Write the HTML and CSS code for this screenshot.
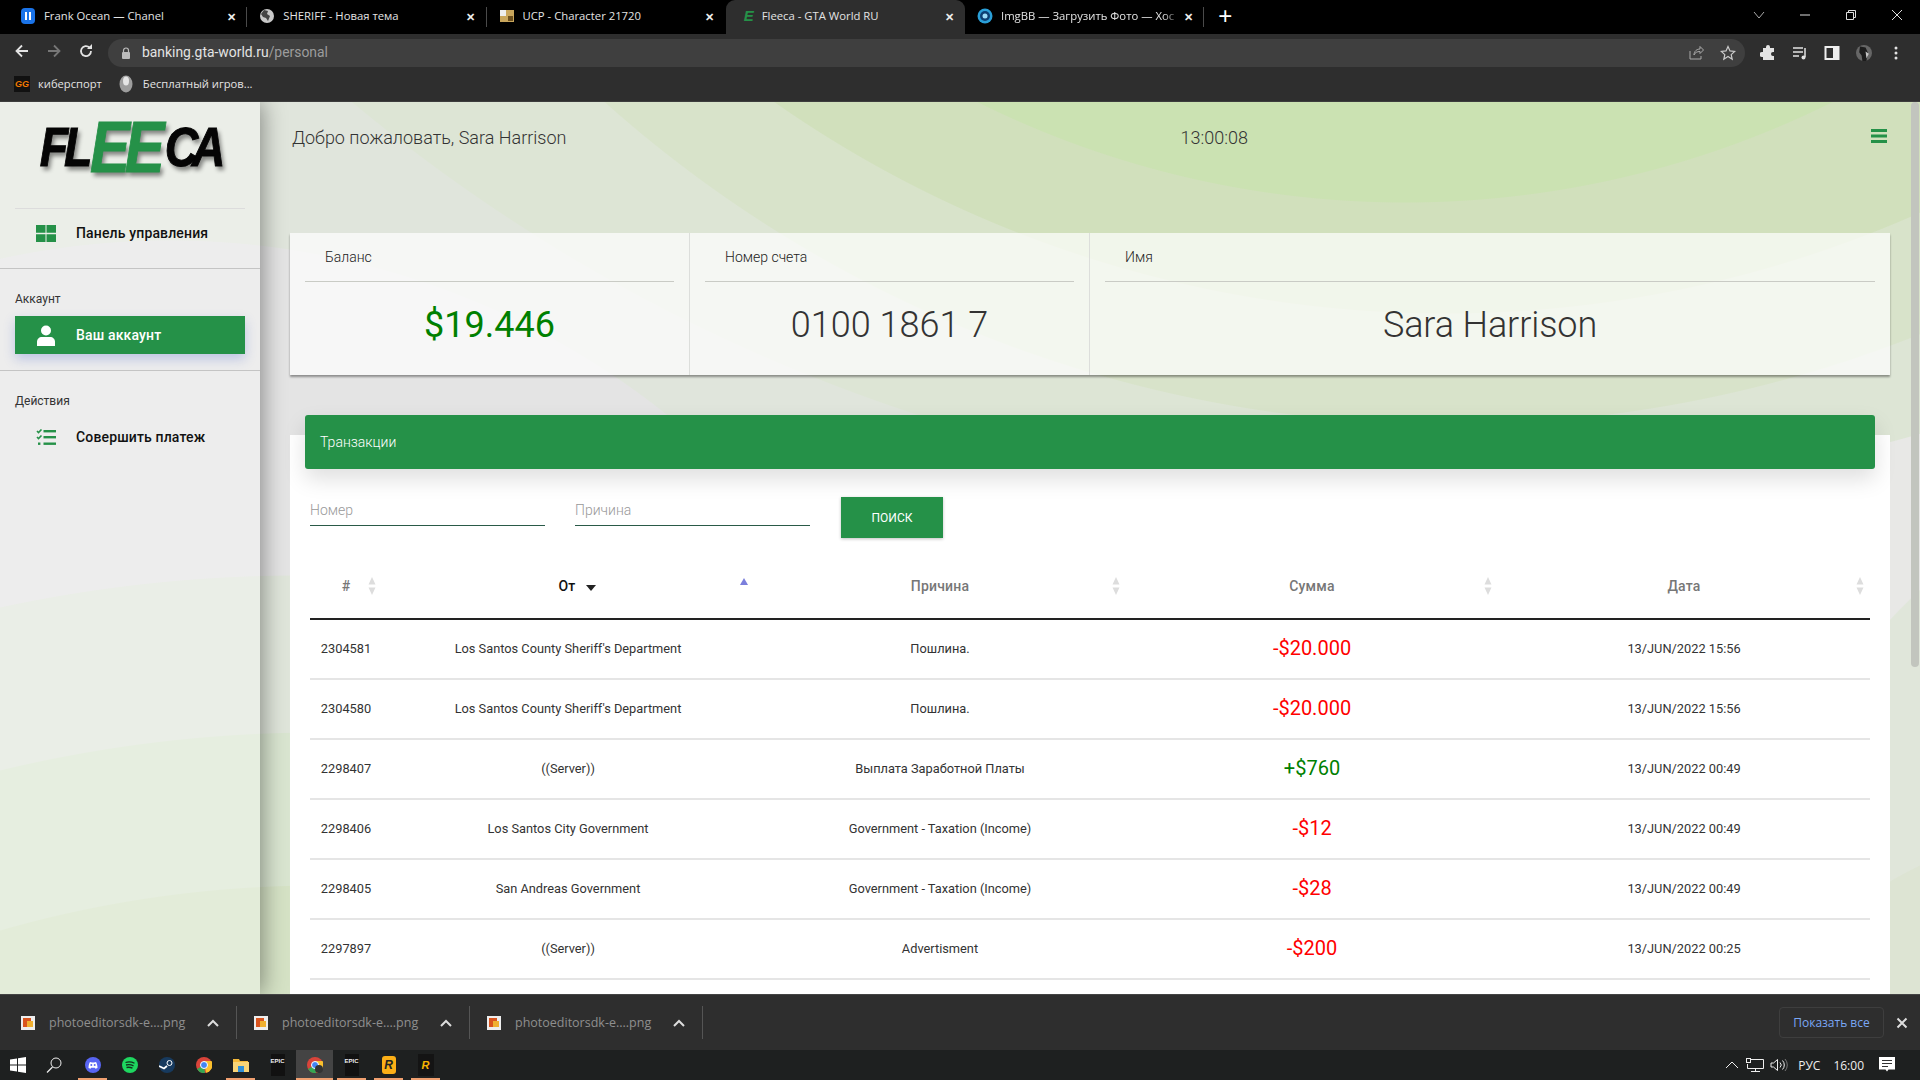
FILE: index.html
```html
<!DOCTYPE html>
<html lang="ru">
<head>
<meta charset="utf-8">
<title>Fleeca - GTA World RU</title>
<link rel="stylesheet" href="styles.css">
</head>
<body>
<div class="tabstrip">
  <div class="tab">
    <svg class="fav" viewBox="0 0 16 16"><rect x="1" y="0" width="14" height="16" rx="4" fill="#1a73e8"/><rect x="5" y="4" width="2" height="8" fill="#fff"/><rect x="9" y="4" width="2" height="8" fill="#fff"/></svg>
    <span class="tab-title">Frank Ocean — Chanel</span><span class="tab-x">✕</span>
  </div>
  <div class="tab">
    <svg class="fav" viewBox="0 0 16 16"><circle cx="8" cy="8" r="7" fill="#c8c8c8"/><path d="M5 2l4 1-1 3 3 2-2 5-2-3-3-1-2-3z" fill="#444"/></svg>
    <span class="tab-title">SHERIFF - Новая тема</span><span class="tab-x">✕</span>
  </div>
  <div class="tab">
    <svg class="fav" viewBox="0 0 16 16"><rect x="1" y="2" width="14" height="12" fill="#c9a65c"/><rect x="1" y="2" width="6" height="6" fill="#eee"/><rect x="9" y="8" width="5" height="5" fill="#6b4e1d"/></svg>
    <span class="tab-title">UCP - Character 21720</span><span class="tab-x">✕</span>
  </div>
  <div class="tab tab-active">
    <span class="fav fav-e">E</span>
    <span class="tab-title">Fleeca - GTA World RU</span><span class="tab-x">✕</span>
  </div>
  <div class="tab tab-last">
    <svg class="fav" viewBox="0 0 16 16"><circle cx="8" cy="8" r="7.5" fill="#2a9fd8"/><circle cx="8" cy="8" r="5" fill="#0d3f73"/><circle cx="8" cy="8" r="2.5" fill="#9bdcf7"/></svg>
    <span class="tab-title tab-fade">ImgBB — Загрузить Фото — Хос</span><span class="tab-x">✕</span>
  </div>
  <span class="newtab">+</span>
  <div class="winctl">
    <svg class="win-ico" viewBox="0 0 12 12"><path d="M1 3l5 6 5-6" fill="none" stroke="#aaa"/></svg>
    <svg class="win-ico" viewBox="0 0 12 12"><path d="M1 6h10" stroke="#ddd"/></svg>
    <svg class="win-ico" viewBox="0 0 12 12"><path d="M1.5 3.5h7v7h-7zM3.5 3V1.5h7v7H9" fill="none" stroke="#ddd"/></svg>
    <svg class="win-ico" viewBox="0 0 12 12"><path d="M1 1l10 10M11 1L1 11" stroke="#ddd"/></svg>
  </div>
</div>

<div class="toolbar">
  <svg class="tb-ico tb-back" viewBox="0 0 16 16"><path d="M14 8H3M8 2.5L2.5 8 8 13.5" fill="none" stroke="#e3e3e3" stroke-width="1.8"/></svg>
  <svg class="tb-ico" viewBox="0 0 16 16"><path d="M2 8h11M8 2.5L13.500 8 8 13.500" fill="none" stroke="#777" stroke-width="1.800"/></svg>
  <svg class="tb-ico" viewBox="0 0 16 16"><path d="M13 8a5 5 0 1 1-1.500-3.500" fill="none" stroke="#e3e3e3" stroke-width="1.800"/><path d="M14 1v5H9z" fill="#e3e3e3"/></svg>
  <div class="omnibox">
    <svg class="lock" viewBox="0 0 10 12"><path d="M2.500 5V3.500a2.500 2.500 0 0 1 5 0V5" fill="none" stroke="#bbb" stroke-width="1.200"/><rect x="1" y="5" width="8" height="7" rx="1" fill="#bbb"/></svg>
    <span class="url">banking.gta-world.ru<span class="url-path">/personal</span></span>
    <svg class="omni-ico" viewBox="0 0 16 16"><path d="M2 6v8h11v-3M6 10c0-4 3-6 6-6V1.500L15.500 5 12 8.500V6.500c-3 0-5 1-6 3.500z" fill="none" stroke="#aaa"/></svg>
    <svg class="omni-ico" viewBox="0 0 16 16"><path d="M8 1.500l2 4.400 4.700.5-3.500 3.200 1 4.700L8 11.500l-4.200 2.800 1-4.700L1.300 6.400 6 5.900z" fill="none" stroke="#ccc" stroke-width="1.200"/></svg>
  </div>
  <div class="tb-right">
    <svg class="tb-ico" viewBox="0 0 16 16"><path d="M6 2a2 2 0 0 1 4 0v1h4v4h-1a2 2 0 0 0 0 4h1v4H3v-3H2a2.500 2.500 0 0 1 0-5h1V3h3z" fill="#e3e3e3"/></svg>
    <svg class="tb-ico" viewBox="0 0 16 16"><path d="M1 3h10M1 7h10M1 11h6" stroke="#e3e3e3" stroke-width="1.500"/><path d="M13 3v9" stroke="#e3e3e3" stroke-width="1.500"/><circle cx="11.500" cy="12.500" r="2" fill="#e3e3e3"/></svg>
    <svg class="tb-ico" viewBox="0 0 16 16"><rect x="1.500" y="2" width="13" height="12" fill="none" stroke="#eee" stroke-width="2"/><rect x="9" y="2" width="5" height="12" fill="#eee"/></svg>
    <svg class="tb-ico" viewBox="0 0 20 20"><circle cx="10" cy="10" r="10" fill="#666"/><path d="M5 2l7 1 3 7-2 10H8l-1-7-3-4z" fill="#1c1c1c"/><path d="M12 8l4 3-3 6z" fill="#c4c4c4"/></svg>
    <svg class="tb-ico" viewBox="0 0 16 16"><circle cx="8" cy="3" r="1.500" fill="#e3e3e3"/><circle cx="8" cy="8" r="1.500" fill="#e3e3e3"/><circle cx="8" cy="13" r="1.500" fill="#e3e3e3"/></svg>
  </div>
</div>

<div class="bookmarks">
  <div class="bm">
    <span class="bm-gg">GG</span><span>киберспорт</span>
  </div>
  <div class="bm">
    <svg class="bm-ico" viewBox="0 0 14 18"><ellipse cx="7" cy="9" rx="6.500" ry="8.500" fill="#9d9d9d"/><ellipse cx="7" cy="6" rx="3" ry="4.500" fill="#e5e5e5"/></svg><span>Бесплатный игров...</span>
  </div>
</div>

<div class="page">
  <aside class="sidebar">
    <div class="logo"><div class="logo-in"><span class="logo-k">FL</span><span class="logo-g">EE</span><span class="logo-k logo-ca">CA</span></div></div>
    <div class="side-top">
      <a class="nav-item">
        <svg class="nav-ico" viewBox="0 0 20 17"><path d="M0 0h9.500v7.800H0zM10.500 0H20v7.800h-9.500zM0 9.200h9.500V17H0zM10.500 9.200H20V17h-9.500z" fill="#259148"/></svg>
        Панель управления
      </a>
    </div>
    <div class="side-sec">
      <div class="side-label">Аккаунт</div>
      <a class="nav-item nav-on">
        <svg class="nav-ico" viewBox="0 0 20 21"><circle cx="10" cy="5.500" r="5" fill="#fff"/><path d="M1 21v-4c0-3 2-5 5-5h8c3 0 5 2 5 5v4z" fill="#fff"/></svg>
        Ваш аккаунт
      </a>
    </div>
    <div class="side-sec side-sec-last">
      <div class="side-label">Действия</div>
      <a class="nav-item">
        <svg class="nav-ico" viewBox="0 0 20 17"><path d="M1 2l1.500 1.500L5.500 .5M1 8l1.500 1.500L5.500 6.500" fill="none" stroke="#259148" stroke-width="1.600"/><rect x="7.500" y="1" width="12.500" height="2.400" fill="#259148"/><rect x="7.500" y="7" width="12.500" height="2.400" fill="#259148"/><rect x="7.500" y="13.500" width="12.500" height="2.400" fill="#259148"/><rect x="2" y="13.500" width="2.400" height="2.400" fill="#259148"/></svg>
        Совершить платеж
      </a>
    </div>
  </aside>

  <main class="content">
    <header class="topbar">
      <span class="welcome">Добро пожаловать, Sara Harrison</span>
      <span class="clock">13:00:08</span>
      <svg class="burger" viewBox="0 0 16 14"><path d="M0 0h16v3H0zM0 5.500h16v3H0zM0 11h16v3H0z" fill="#259148"/></svg>
    </header>

    <section class="stats">
      <div class="stat">
        <div class="stat-head">Баланс</div>
        <div class="stat-val val-green">$19.446</div>
      </div>
      <div class="stat">
        <div class="stat-head">Номер счета</div>
        <div class="stat-val">0100 1861 7</div>
      </div>
      <div class="stat">
        <div class="stat-head">Имя</div>
        <div class="stat-val val-name">Sara Harrison</div>
      </div>
    </section>

    <section class="panel">
      <div class="panel-bar">Транзакции</div>
      <form class="filters">
        <input class="field" type="text" placeholder="Номер">
        <input class="field" type="text" placeholder="Причина">
        <button class="search" type="button">ПОИСК</button>
      </form>
      <table class="tx">
        <colgroup><col class="c-id"><col><col><col><col></colgroup>
        <thead>
          <tr>
            <th>#<svg class="sort" viewBox="0 0 8 18"><path d="M4 0l3.500 7.500h-7zM4 18L.5 10.500h7z" fill="#ddd"/></svg></th>
            <th class="th-on"><span class="th-from">От</span><svg class="caret" viewBox="0 0 10 6"><path d="M0 0h10L5 6z" fill="#222"/></svg><svg class="sort-up" viewBox="0 0 8 7"><path d="M4 0l4 7H0z" fill="#7b7fdc"/></svg></th>
            <th>Причина<svg class="sort" viewBox="0 0 8 18"><path d="M4 0l3.500 7.500h-7zM4 18L.5 10.500h7z" fill="#ddd"/></svg></th>
            <th>Сумма<svg class="sort" viewBox="0 0 8 18"><path d="M4 0l3.500 7.500h-7zM4 18L.5 10.500h7z" fill="#ddd"/></svg></th>
            <th>Дата<svg class="sort" viewBox="0 0 8 18"><path d="M4 0l3.500 7.500h-7zM4 18L.5 10.500h7z" fill="#ddd"/></svg></th>
          </tr>
        </thead>
        <tbody>
          <tr><td>2304581</td><td>Los Santos County Sheriff's Department</td><td>Пошлина.</td><td class="neg">-$20.000</td><td>13/JUN/2022 15:56</td></tr>
          <tr><td>2304580</td><td>Los Santos County Sheriff's Department</td><td>Пошлина.</td><td class="neg">-$20.000</td><td>13/JUN/2022 15:56</td></tr>
          <tr><td>2298407</td><td>((Server))</td><td>Выплата Заработной Платы</td><td class="pos">+$760</td><td>13/JUN/2022 00:49</td></tr>
          <tr><td>2298406</td><td>Los Santos City Government</td><td>Government - Taxation (Income)</td><td class="neg">-$12</td><td>13/JUN/2022 00:49</td></tr>
          <tr><td>2298405</td><td>San Andreas Government</td><td>Government - Taxation (Income)</td><td class="neg">-$28</td><td>13/JUN/2022 00:49</td></tr>
          <tr><td>2297897</td><td>((Server))</td><td>Advertisment</td><td class="neg">-$200</td><td>13/JUN/2022 00:25</td></tr>
        </tbody>
      </table>
    </section>
  </main>
  <div class="scrollbar"><div class="thumb"></div></div>
</div>

<div class="downloads">
  <div class="dl">
    <svg class="dl-ico" viewBox="0 0 14 14"><rect width="14" height="14" fill="#eee"/><rect x="2" y="2" width="8" height="9" fill="#d9541e"/><rect x="6" y="5" width="6" height="6" fill="#f0b030"/></svg>
    <span class="dl-name">photoeditorsdk-e....png</span>
    <svg class="dl-chev" viewBox="0 0 12 8"><path d="M1 7l5-5 5 5" fill="none" stroke="#ddd" stroke-width="2"/></svg>
  </div>
  <div class="dl">
    <svg class="dl-ico" viewBox="0 0 14 14"><rect width="14" height="14" fill="#eee"/><rect x="2" y="2" width="8" height="9" fill="#d9541e"/><rect x="6" y="5" width="6" height="6" fill="#f0b030"/></svg>
    <span class="dl-name">photoeditorsdk-e....png</span>
    <svg class="dl-chev" viewBox="0 0 12 8"><path d="M1 7l5-5 5 5" fill="none" stroke="#ddd" stroke-width="2"/></svg>
  </div>
  <div class="dl">
    <svg class="dl-ico" viewBox="0 0 14 14"><rect width="14" height="14" fill="#eee"/><rect x="2" y="2" width="8" height="9" fill="#d9541e"/><rect x="6" y="5" width="6" height="6" fill="#f0b030"/></svg>
    <span class="dl-name">photoeditorsdk-e....png</span>
    <svg class="dl-chev" viewBox="0 0 12 8"><path d="M1 7l5-5 5 5" fill="none" stroke="#ddd" stroke-width="2"/></svg>
  </div>
  <button class="showall" type="button">Показать все</button>
  <svg class="dl-close" viewBox="0 0 12 12"><path d="M1.500 1.500l9 9M10.500 1.500l-9 9" stroke="#ddd" stroke-width="2"/></svg>
</div>

<div class="taskbar">
  <div class="tk-start"><svg class="tk-ico" viewBox="0 0 16 16"><path d="M0 2.500l7-1V7.600H0zM8 1.300L16 0v7.600H8zM0 8.400h7v6.100l-7-1zM8 8.400h8V16l-8-1.200z" fill="#fff"/></svg></div>
  <div class="tk tk-search"><svg class="tk-ico" viewBox="0 0 16 16"><circle cx="10" cy="6" r="5" fill="none" stroke="#eee"/><path d="M6.500 10L1 15.500" stroke="#eee" stroke-width="1.200"/></svg></div>
  <div class="tk tk-run"><svg class="tk-ico" viewBox="0 0 16 16"><circle cx="8" cy="8" r="8" fill="#5865f2"/><path d="M3.500 11c0-3 1-5.500 1.500-6l2 .5h2l2-.5c.5.500 1.500 3 1.500 6l-2 .7-.7-1H6.200l-.7 1z" fill="#fff"/><circle cx="6.300" cy="8" r="1" fill="#5865f2"/><circle cx="9.700" cy="8" r="1" fill="#5865f2"/></svg></div>
  <div class="tk"><svg class="tk-ico" viewBox="0 0 16 16"><circle cx="8" cy="8" r="8" fill="#1ed760"/><path d="M3.500 5.500c3-1 6-.8 9 .8M4 8c2.500-.7 5-.5 7.500.8M4.500 10.500c2-.5 4-.3 6 .7" fill="none" stroke="#12311c" stroke-width="1.300"/></svg></div>
  <div class="tk"><svg class="tk-ico" viewBox="0 0 16 16"><circle cx="8" cy="8" r="8" fill="#173a5e"/><circle cx="10.500" cy="6" r="2.500" fill="none" stroke="#fff"/><path d="M0 9l5 2.500 3-2.500" fill="none" stroke="#fff" stroke-width="1.800"/></svg></div>
  <div class="tk"><svg class="tk-ico" viewBox="0 0 16 16"><circle cx="8" cy="8" r="8" fill="#d9443a"/><path d="M8 8L1 12a8 8 0 0 0 8 4z" fill="#35a853"/><path d="M8 4h7.500a8 8 0 0 1-5.500 11.700z" fill="#fbc02d"/><circle cx="8" cy="8" r="3.500" fill="#4285f4" stroke="#fff"/></svg></div>
  <div class="tk tk-run"><svg class="tk-ico" viewBox="0 0 16 16"><path d="M0 2h6l1 2h8v4H0z" fill="#f5b93a"/><path d="M0 5h16v10H0z" fill="#f8d477"/><path d="M5 9h6v6H5z" fill="#2f8fd8"/></svg></div>
  <div class="tk"><span class="tk-epic">EPIC</span></div>
  <div class="tk tk-run tk-active"><svg class="tk-ico" viewBox="0 0 16 16"><circle cx="8" cy="8" r="8" fill="#d9443a"/><path d="M8 8L1 12a8 8 0 0 0 8 4z" fill="#35a853"/><path d="M8 4h7.500a8 8 0 0 1-5.500 11.700z" fill="#fbc02d"/><circle cx="8" cy="8" r="3.500" fill="#4285f4" stroke="#fff"/><circle cx="12" cy="12" r="4" fill="#333"/></svg></div>
  <div class="tk tk-run"><span class="tk-epic">EPIC</span></div>
  <div class="tk tk-run"><span class="tk-rock">R</span></div>
  <div class="tk tk-run"><span class="tk-rage">R</span></div>
  <div class="tray">
    <svg class="tray-ico" viewBox="0 0 14 8"><path d="M1 7l6-6 6 6" fill="none" stroke="#eee"/></svg>
    <svg class="tray-net" viewBox="0 0 18 14"><path d="M4.500 1.500H17.500V10.500H1.500V6M9.500 10.500v3M5 13.500h9" fill="none" stroke="#eee"/><rect x=".5" y=".5" width="4" height="4" fill="none" stroke="#eee"/></svg>
    <svg class="tray-vol" viewBox="0 0 18 14"><path d="M1 5h2.500L7.500 1.500v11L3.500 9H1zM10 4.500a3.500 3.500 0 0 1 0 5M12.500 2.500a6.500 6.500 0 0 1 0 9" fill="none" stroke="#eee"/><path d="M15 1a9 9 0 0 1 0 12" fill="none" stroke="#777"/></svg>
    <span class="tray-txt">РУС</span>
    <span class="tray-txt tray-time">16:00</span>
    <svg class="tray-note" viewBox="0 0 16 16"><path d="M0 0h16v12.500H9.500L8 14.500 6.500 12.500H0z" fill="#fff"/><path d="M3 3.500h10M3 6.500h10M3 9.500h6" stroke="#333"/></svg>
  </div>
</div>
</body>
</html>
```

FILE: styles.css
```css
* { box-sizing: border-box; }
html, body { margin: 0; height: 100%; }
body {
  width: 1920px;
  height: 1080px;
  overflow: hidden;
  display: flex;
  flex-direction: column;
  font-family: Roboto, "Liberation Sans", sans-serif;
  background: #2e2e2e;
}

/* browser tabs */
.tabstrip {
  flex: 0 0 34px;
  display: flex;
  align-items: stretch;
  background: #000;
  padding-left: 8px;
  font-family: "Open Sans", "Noto Sans", sans-serif;
}
.tab {
  width: 239.25px;
  display: flex;
  align-items: center;
  padding: 0 9px 2px 12px;
  color: #e3e3e3;
  position: relative;
}
.tab::after {
  content: "";
  position: absolute;
  right: 0;
  top: 7px;
  bottom: 7px;
  width: 1px;
  background: #4a4a4a;
}
.tab:nth-child(3)::after, .tab-active::after { display: none; }
.tab-active { background: #2e2e2e; border-radius: 9px 9px 0 0; padding-left: 15px; }
.fav { width: 16px; height: 16px; flex: none; margin-right: 8px; }
.fav-e {
  color: #259148;
  font: italic bold 15px/16px "Liberation Sans", sans-serif;
  margin-right: 5px;
  text-align: center;
}
.tab-title { flex: 1; white-space: nowrap; overflow: hidden; font-size: 11.3px; line-height: 16px; }
.tab-fade { -webkit-mask-image: linear-gradient(90deg, #000 90%, transparent); mask-image: linear-gradient(90deg, #000 90%, transparent); }
.tab-x { flex: none; width: 14px; font-size: 11px; font-weight: 700; color: #eee; text-align: center; }
.newtab { font: 300 24px/32px "Liberation Sans", sans-serif; color: #fff; margin-left: 14px; }
.winctl { margin-left: auto; display: flex; align-items: flex-start; padding-top: 9px; }
.win-ico { width: 12px; height: 12px; margin-right: 34px; }
.win-ico:last-child { margin-right: 17px; }

/* toolbar */
.toolbar {
  flex: 0 0 34px;
  display: flex;
  align-items: center;
  background: #2e2e2e;
  padding-left: 14px;
}
.tb-ico { width: 16px; height: 16px; margin-right: 16px; flex: none; }
.omnibox {
  width: 1639px;
  height: 28px;
  margin: 4px 0 0 -2px;
  display: flex;
  align-items: center;
  background: #3f3f3f;
  border-radius: 14px;
  padding-left: 13px;
}
.lock { width: 10px; height: 12px; margin-right: 11px; }
.url { flex: 1; font-size: 13.9px; line-height: 16px; padding-bottom: 2px; color: #e3e3e3; }
.url-path { color: #9c9c9c; }
.omni-ico { width: 16px; height: 16px; margin-right: 16px; }
.omni-ico:last-child { margin-right: 9px; }
.tb-right { display: flex; align-items: center; margin-left: 15px; padding-top: 4px; }
.tb-right .tb-ico { margin-right: 16px; }

/* bookmarks */
.bookmarks {
  flex: 0 0 34px;
  display: flex;
  align-items: center;
  background: #2e2e2e;
  padding-left: 14px;
  border-bottom: 1px solid #3d3d3d;
  color: #e3e3e3;
  font: 12px "Open Sans", "Noto Sans", sans-serif;
}
.bm { display: flex; align-items: center; margin-right: 17px; font-size: 11.2px; line-height: 16px; padding-bottom: 1px; }
.bm-gg {
  width: 16px;
  height: 16px;
  margin-right: 8px;
  background: #111;
  color: #f57c00;
  font: italic bold 9px/16px "Liberation Sans", sans-serif;
  text-align: center;
}
.bm-ico { width: 14px; height: 18px; margin-right: 10px; }

/* page */
.page {
  flex: 1;
  min-height: 0;
  display: flex;
  overflow: hidden;
  background:
    radial-gradient(circle at 1405px -860px, #cbe2b2 960px, transparent 961px),
    radial-gradient(circle at 1445px -958px, #d1e0bc 1169px, transparent 1170px),
    radial-gradient(circle at 1450px -947px, #d8e3ca 1269px, transparent 1270px),
    radial-gradient(circle at 1450px -1318px, #dde5d5 1715px, transparent 1716px),
    radial-gradient(circle at 320px 1943px, #d5e2c5 1159px, transparent 1160px),
    radial-gradient(circle at 320px 1996px, #d9e5d0 1365px, transparent 1366px),
    radial-gradient(circle at 300px 1895px, #dfe5da 1421px, transparent 1422px),
    radial-gradient(circle at 170px 934px, #e4e4e4 795px, transparent 796px),
    radial-gradient(circle at 2100px 1138px, #dde4d3 415px, transparent 416px),
    radial-gradient(circle at 2400px 998px, #e0e6da 700px, transparent 701px),
    radial-gradient(circle at 2400px 998px, #e8e8e6 999px, transparent 1000px),
    #e0e5dc;
}
.sidebar {
  flex: 0 0 260px;
  width: 260px;
  min-width: 0;
  background: rgba(255, 255, 255, .35);
  box-shadow: 2px 0 22px rgba(0, 0, 0, .42);
  position: relative;
}
.logo { height: 106px; overflow: hidden; }
.logo-in {
  width: 260px;
  padding: 0 0 0 48px;
  font: italic bold 56px/90px "Liberation Sans", sans-serif;
  color: #050505;
  white-space: nowrap;
  text-shadow: 3px 4px 5px rgba(0, 0, 0, .45);
  -webkit-text-stroke: 1px currentColor;
  transform: scaleX(.83);
  transform-origin: 0 0;
}
.logo-k { letter-spacing: -5px; }
.logo-g { font-size: 72px; color: #259148; letter-spacing: -6px; vertical-align: -6px; margin-left: 2px; }
.logo-ca { margin-left: 6px; letter-spacing: -8px; }
.side-top { margin: 0 15px; border-top: 1px solid #dcdcdc; padding: 5px 0 16px; }
.side-sec { border-top: 1px solid #c4c4c4; padding: 21px 15px 16px; }
.side-sec-last { padding-bottom: 0; }
.side-label { height: 18px; margin-bottom: 8px; font-size: 12px; line-height: 18px; color: #333; }
.nav-item {
  height: 38px;
  display: flex;
  align-items: center;
  padding-left: 21px;
  font-size: 14px;
  font-weight: 500;
  letter-spacing: .15px;
  color: #111;
}
.nav-ico { width: 20px; height: 17px; margin-right: 20px; flex: none; }
.nav-on {
  background: #259148;
  color: #fff;
  box-shadow: 0 5px 12px rgba(60, 90, 200, .28);
}
.nav-on .nav-ico { height: 21px; }

/* content */
.content { flex: 1; min-width: 0; display: flex; flex-direction: column; padding: 0 20px 0 30px; }
.topbar {
  flex: 0 0 131px;
  display: flex;
  justify-content: space-between;
  align-items: flex-start;
  padding: 25px 3px 0 2px;
}
.welcome, .clock { font-size: 18px; font-weight: 300; line-height: 22px; color: #333; }
.clock { margin-right: 9px; }
.burger { width: 16px; height: 14px; margin-top: 2px; }

.stats {
  display: grid;
  grid-template-columns: 1fr 1fr 2fr;
  height: 142px;
  flex: none;
  box-shadow: 0 2px 2px rgba(0, 0, 0, .38);
}
.stat {
  background: rgba(255, 255, 255, .7);
  border-right: 1px solid #dcdedb;
  padding: 0 15px;
}
.stat:last-child { border-right: 0; }
.stat-head {
  height: 49px;
  padding: 15px 0 0 20px;
  border-bottom: 1px solid #c9cbc5;
  font-size: 14px;
  font-weight: 300;
  line-height: 18px;
  color: #222;
}
.stat-val {
  margin-top: 19px;
  text-align: center;
  font-size: 36px;
  font-weight: 300;
  line-height: 48px;
  color: #333;
}
.val-green { color: #008000; font-weight: 400; }
.val-name { letter-spacing: -.1px; }

.panel { margin-top: 60px; flex: 1; background: #fff; }
.panel-bar {
  margin: -20px 15px 0;
  height: 54px;
  padding: 0 15px;
  background: #259148;
  border-radius: 3px;
  box-shadow: 0 10px 22px rgba(0, 0, 0, .13);
  color: #fff;
  font-size: 14px;
  font-weight: 300;
  line-height: 54px;
}
.filters { height: 69px; display: flex; align-items: flex-start; padding: 28px 20px 0; }
.field {
  width: 235px;
  height: 29px;
  margin-right: 30px;
  padding: 0 0 2px;
  border: 0;
  border-bottom: 1px solid #2a5a48;
  background: transparent;
  font: 300 14px Roboto, sans-serif;
  outline: none;
}
.field::placeholder { color: #999; opacity: 1; }
.search {
  width: 102px;
  height: 41px;
  margin-left: 1px;
  border: 0;
  background: #259148;
  color: #fff;
  font: 400 12px Roboto, sans-serif;
  box-shadow: 0 1px 3px rgba(0, 0, 0, .25);
}

.tx { width: 1560px; margin: 0 20px; table-layout: fixed; border-collapse: separate; border-spacing: 0; }
.c-id { width: 72px; }
.tx th {
  height: 82px;
  padding: 16px 0 0;
  border-bottom: 2px solid #222;
  font-size: 14px;
  font-weight: 500;
  letter-spacing: .2px;
  color: #777;
  position: relative;
}
.tx .th-on { color: #111; padding-left: 18px; }
.th-from { margin-right: 10px; }
.sort { position: absolute; right: 6px; top: 39px; width: 8px; height: 18px; }
.sort-up { position: absolute; right: 6px; top: 40px; width: 8px; height: 7px; }
.caret { width: 10px; height: 6px; }
.tx td {
  height: 60px;
  padding: 0 0 2px;
  border-bottom: 2px solid #e5e5e5;
  text-align: center;
  font-size: 12.8px;
  color: #333;
}
.tx .neg, .tx .pos { font-size: 20px; }
.tx .neg { color: #f00; }
.tx .pos { color: #008000; }

.scrollbar { flex: 0 0 10px; padding: 0 1px; }
.thumb { height: 565px; background: #c2c5be; border-radius: 4px; }

/* downloads */
.downloads {
  flex: 0 0 56px;
  display: flex;
  align-items: center;
  background: #2e2e2e;
  border-top: 1px solid #444;
}
.dl {
  width: 233px;
  height: 33px;
  display: flex;
  align-items: center;
  padding-left: 21px;
  border-right: 1px solid #555;
}
.dl:first-child { width: 237px; }
.dl + .dl { padding-left: 17px; }
.dl-ico { width: 14px; height: 14px; margin-right: 14px; }
.dl-name { width: 150px; font: 12.5px "Open Sans", sans-serif; color: #8f8f8f; white-space: nowrap; }
.dl-chev { width: 12px; height: 8px; margin-left: 8px; }
.showall {
  width: 105px;
  height: 31px;
  margin-left: auto;
  background: transparent;
  border: 1px solid #3e3e3e;
  border-radius: 4px;
  color: #7aa7f5;
  font: 12px "Open Sans", sans-serif;
}
.dl-close { width: 12px; height: 12px; margin: 0 12px 0 12px; }

/* taskbar */
.taskbar { flex: 0 0 30px; display: flex; background: #1e2020; }
.tk-start, .tk { width: 37px; display: flex; align-items: center; justify-content: center; position: relative; }
.tk-start { width: 38px; margin-left: -1px; }
.tk-search .tk-ico { margin-left: -3px; }
.tk-ico { width: 16px; height: 16px; }
.tk-run::after {
  content: "";
  position: absolute;
  left: 4px;
  right: 4px;
  bottom: 0;
  height: 2px;
  background: #f0a070;
}
.tk-active { background: #444; }
.tk-active::after { left: 0; right: 0; }
.tk-epic {
  width: 14px;
  height: 22px;
  background: #111;
  color: #eee;
  font: bold 6px/14px "Liberation Sans", sans-serif;
  text-align: center;
}
.tk-rock {
  width: 14px;
  height: 18px;
  border-radius: 3px;
  background: #fcaf17;
  color: #222;
  font: italic bold 12px/18px "Liberation Sans", sans-serif;
  text-align: center;
}
.tk-rage {
  width: 16px;
  height: 22px;
  background: #141414;
  color: #f7b500;
  font: italic bold 11px/22px "Liberation Sans", sans-serif;
  text-align: center;
}
.tray { margin-left: auto; display: flex; align-items: center; padding-right: 25px; color: #eee; font-size: 12px; }
.tray-ico { width: 14px; height: 8px; margin-right: 7px; }
.tray-net { width: 18px; height: 14px; margin-right: 6px; }
.tray-vol { width: 18px; height: 14px; margin-right: 10px; }
.tray-txt { margin-right: 13px; font: 12px "Open Sans", sans-serif; }
.tray-time { margin-right: 15px; }
.tray-note { width: 16px; height: 16px; }
```
